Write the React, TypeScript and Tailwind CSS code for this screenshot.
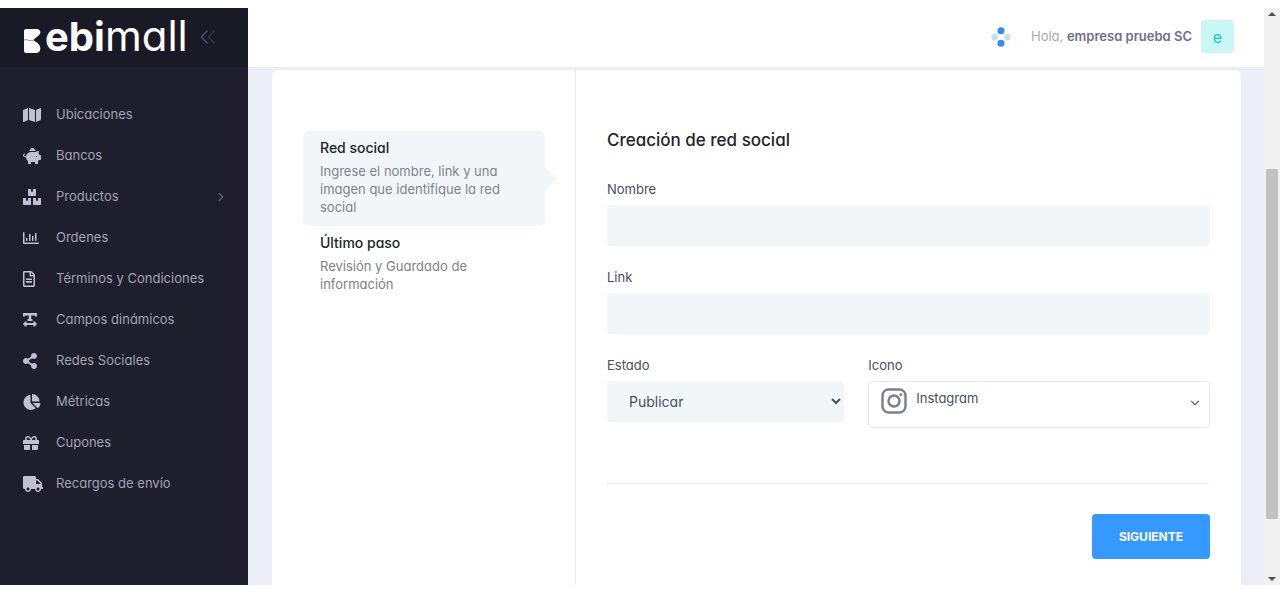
import { useState } from 'react';
import type { IconType } from 'react-icons';
import {
  FaBoxes,
  FaChartPie,
  FaGift,
  FaMap,
  FaPiggyBank,
  FaRegChartBar,
  FaRegFileAlt,
  FaShareAlt,
  FaTextWidth,
  FaTruck,
} from 'react-icons/fa';
import { ChevronDown, ChevronRight } from 'lucide-react';

interface NavItem {
  label: string;
  icon: IconType;
  iconClass: string;
  hasChildren?: boolean;
}

const NAV_ITEMS: NavItem[] = [
  { label: 'Ubicaciones', icon: FaMap, iconClass: 'w-[18px]' },
  { label: 'Bancos', icon: FaPiggyBank, iconClass: 'w-[18px]' },
  { label: 'Productos', icon: FaBoxes, iconClass: 'w-[18px]', hasChildren: true },
  { label: 'Ordenes', icon: FaRegChartBar, iconClass: 'w-4' },
  { label: 'Términos y Condiciones', icon: FaRegFileAlt, iconClass: 'w-3' },
  { label: 'Campos dinámicos', icon: FaTextWidth, iconClass: 'w-3.5' },
  { label: 'Redes Sociales', icon: FaShareAlt, iconClass: 'w-3.5' },
  { label: 'Métricas', icon: FaChartPie, iconClass: 'w-[18px]' },
  { label: 'Cupones', icon: FaGift, iconClass: 'w-4' },
  { label: 'Recargos de envío', icon: FaTruck, iconClass: 'w-5' },
];

const STEPS = [
  {
    title: 'Red social',
    description: 'Ingrese el nombre, link y una imagen que identifique la red social',
  },
  { title: 'Último paso', description: 'Revisión y Guardado de información' },
];

function Logo() {
  return (
    <a href="#" className="flex items-center gap-1 text-white">
      <svg viewBox="0 0 17 24" className="mt-2 h-6 w-[17px]" aria-hidden="true">
        <path
          d="M2 0H12.500C16 0 17.300 3 15.500 5.600C14.300 7.300 11.500 8.500 9.300 11.200C12 12.600 15 14.500 16 17.500C17 21 15.500 24 12.500 24H2Q0 24 0 22V2Q0 0 2 0Z"
          fill="currentColor"
        />
        <path d="M0 11C3 9.700 4.500 12.600 9.300 11.200" fill="none" stroke="#77777f" strokeWidth="0.800" />
      </svg>
      <span className="text-[40px] leading-[48px] font-bold">
        ebi<span className="text-[42px] font-normal">mall</span>
      </span>
    </a>
  );
}

function Sidebar() {
  return (
    <aside className="flex w-[248px] shrink-0 flex-col bg-[#1e1e2d]">
      <div className="flex h-[59px] items-center justify-between bg-[#1a1a27] pb-0.5 pl-6 pr-8">
        <Logo />
        <button type="button" aria-label="Contraer menú" className="text-[#494b74]">
          <svg viewBox="0 0 16 16" className="h-4 w-4" fill="none" stroke="currentColor" strokeWidth="1.500">
            <path d="M7.500 1.500L1.500 8L7.500 14.500" />
            <path d="M14.500 1.500L8.500 8L14.500 14.500" opacity="0.5" />
          </svg>
        </button>
      </div>
      <nav className="pt-[27px]">
        <ul>
          {NAV_ITEMS.map(({ label, icon: Icon, iconClass, hasChildren }) => (
            <li key={label}>
              <a href="#" className="flex h-[41px] items-center pl-[23px] pr-5 text-[13px] text-[#a2a3b7]">
                <span className="w-[33px]">
                  <Icon className={`h-4 text-[#c0c0d2] ${iconClass}`} />
                </span>
                <span className="flex-1">{label}</span>
                {hasChildren && <ChevronRight className="h-3.5 w-3.5 text-[#5f607b]" strokeWidth={2} />}
              </a>
            </li>
          ))}
        </ul>
      </nav>
    </aside>
  );
}

function Header() {
  return (
    <header className="flex h-[59px] items-center justify-end bg-white pb-0.5 pr-[30px]">
      <svg viewBox="0 0 20 20" className="mr-5 h-5 w-5" aria-hidden="true">
        <circle cx="3.500" cy="10" r="3.200" fill="#c3dffa" />
        <circle cx="16.500" cy="10" r="3.200" fill="#c3dffa" />
        <circle cx="10" cy="3.700" r="3.500" fill="#2f8df5" />
        <circle cx="10" cy="16.300" r="3.500" fill="#2f8df5" />
      </svg>
      <p className="text-[13px] text-[#a9a9b9]">
        Hola, <span className="font-semibold text-[#6f7088]">empresa prueba SC</span>
      </p>
      <span className="ml-[9px] flex h-[33px] w-[33px] items-center justify-center rounded bg-[#c9f7f5] text-base text-[#1bc5bd]">
        e
      </span>
    </header>
  );
}

function StepList({ active }: { active: number }) {
  return (
    <ol className="w-[304px] shrink-0 border-r border-[#ebedf3] pl-[31px] pr-[30px] pt-[61px]">
      {STEPS.map((step, index) => (
        <li
          key={step.title}
          className={
            index === active
              ? 'relative rounded-md bg-[#f3f6f9] px-[17px] pb-2.5 pt-1.5'
              : 'px-[17px] pb-2.5 pt-1.5'
          }
        >
          <h4 className="text-sm leading-[22px] font-medium text-[#212529]">{step.title}</h4>
          <p className="mt-[3px] text-[13px] leading-[18px] text-[#80808f]">{step.description}</p>
          {index === active && (
            <svg viewBox="0 0 12 24" className="absolute left-full top-9 h-6 w-3" fill="#f3f6f9" aria-hidden="true">
              <path d="M0 0L12 12L0 24Z" />
            </svg>
          )}
        </li>
      ))}
    </ol>
  );
}

function InstagramIcon() {
  return (
    <svg
      viewBox="0 0 26 26"
      className="pointer-events-none absolute left-[13px] top-[7px] h-[26px] w-[26px]"
      fill="none"
      stroke="#7c7d8c"
      strokeWidth="2.400"
      aria-hidden="true"
    >
      <rect x="1.500" y="1.500" width="23" height="23" rx="6" />
      <circle cx="13" cy="13" r="5.500" />
      <circle cx="19.800" cy="6.500" r="1.500" fill="#7c7d8c" stroke="none" />
    </svg>
  );
}

const labelClass = 'mb-1.5 block text-[13px] leading-5 text-[#464e5f]';
const fieldClass = 'block h-[41px] w-full rounded bg-[#f3f6f9] text-sm text-[#464e5f] outline-none';

function SocialForm() {
  const [name, setName] = useState('');
  const [link, setLink] = useState('');
  const [status, setStatus] = useState('Publicar');

  return (
    <form className="min-w-0 flex-1 px-[31px] pb-6 pt-[58px]" onSubmit={(e) => e.preventDefault()}>
      <h3 className="mb-[27px] text-[17px] leading-6 font-medium text-[#212529]">Creación de red social</h3>
      <div className="mb-[21px]">
        <label htmlFor="name" className={labelClass}>
          Nombre
        </label>
        <input id="name" value={name} onChange={(e) => setName(e.target.value)} className={`${fieldClass} px-4`} />
      </div>
      <div className="mb-[21px]">
        <label htmlFor="link" className={labelClass}>
          Link
        </label>
        <input id="link" value={link} onChange={(e) => setLink(e.target.value)} className={`${fieldClass} px-4`} />
      </div>
      <div className="grid grid-cols-12 gap-6">
        <div className="col-span-5">
          <label htmlFor="status" className={labelClass}>
            Estado
          </label>
          <select
            id="status"
            value={status}
            onChange={(e) => setStatus(e.target.value)}
            className={`${fieldClass} pl-[18px]`}
          >
            <option>Publicar</option>
          </select>
        </div>
        <div className="col-span-7">
          <label htmlFor="icon" className={labelClass}>
            Icono
          </label>
          <div className="relative">
            <select
              id="icon"
              className="block h-[47px] w-full appearance-none rounded border border-[#e4e6ef] bg-white pb-3 pl-[47px] text-[13px] text-[#464e5f] outline-none"
            >
              <option>Instagram</option>
            </select>
            <InstagramIcon />
            <ChevronDown className="pointer-events-none absolute right-2 top-[15px] h-3.5 w-3.5 text-[#646473]" />
          </div>
        </div>
      </div>
      <div className="mt-[55px] flex justify-end border-t border-[#ebedf3] pt-[30px]">
        <button
          type="submit"
          className="h-[45px] rounded bg-[#3699ff] px-[27px] text-xs font-bold text-white"
        >
          SIGUIENTE
        </button>
      </div>
    </form>
  );
}

function ScrollTrack() {
  return (
    <div className="flex w-4 shrink-0 flex-col items-center justify-between bg-[#f1f1f1] py-1" aria-hidden="true">
      <svg viewBox="0 0 8 4" className="h-1 w-2" fill="#505050">
        <path d="M0 4L4 0L8 4Z" />
      </svg>
      <div className="flex w-full flex-1 flex-col px-0.5">
        <div className="flex-[153]" />
        <div className="flex-[350] bg-[#c1c1c1]" />
        <div className="flex-[58]" />
      </div>
      <svg viewBox="0 0 8 4" className="h-1 w-2" fill="#505050">
        <path d="M0 0L4 4L8 0Z" />
      </svg>
    </div>
  );
}

export default function App() {
  return (
    <div className="flex min-h-screen bg-white pb-1 pt-2 font-['Inter','Liberation_Sans',sans-serif] [font-feature-settings:'cv11']">
      <Sidebar />
      <div className="flex min-w-0 flex-1 flex-col bg-[#ebedf7]">
        <Header />
        <main className="flex flex-1 pl-6 pr-[23px] pt-[3px]">
          <div className="flex flex-1 rounded-t-md bg-white">
            <StepList active={0} />
            <SocialForm />
          </div>
        </main>
      </div>
      <ScrollTrack />
    </div>
  );
}
